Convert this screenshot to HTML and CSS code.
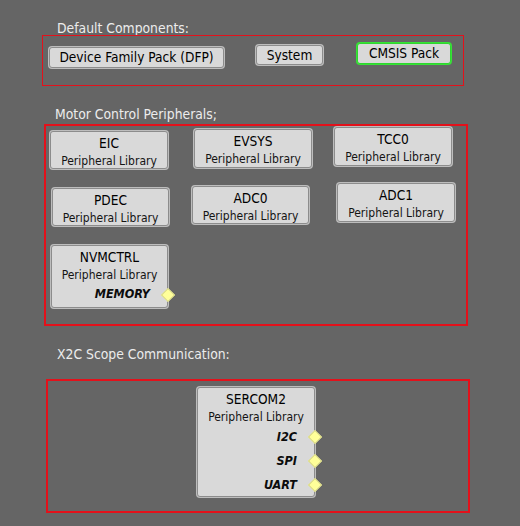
FILE: index.html
```html
<!DOCTYPE html>
<html>
<head>
<meta charset="utf-8">
<link rel="stylesheet" href="styles.css">
</head>
<body>
<div class="canvas">
  <section class="group g1">
    <div class="label">Default Components:</div>
    <div class="box box1">
      <div class="btn dfp">Device Family Pack (DFP)</div>
      <div class="btn sys">System</div>
      <div class="btn cmsis">CMSIS Pack</div>
    </div>
  </section>

  <section class="group g2">
    <div class="label">Motor Control Peripherals;</div>
    <div class="box box2">
      <div class="node n-eic"><div class="title">EIC</div><div class="sub">Peripheral Library</div></div>
      <div class="node n-evsys"><div class="title">EVSYS</div><div class="sub">Peripheral Library</div></div>
      <div class="node n-tcc0"><div class="title">TCC0</div><div class="sub">Peripheral Library</div></div>
      <div class="node n-pdec"><div class="title">PDEC</div><div class="sub">Peripheral Library</div></div>
      <div class="node n-adc0"><div class="title">ADC0</div><div class="sub">Peripheral Library</div></div>
      <div class="node n-adc1"><div class="title">ADC1</div><div class="sub">Peripheral Library</div></div>
      <div class="node n-nvm">
        <div class="title">NVMCTRL</div><div class="sub">Peripheral Library</div>
        <div class="port">MEMORY<span class="pin"></span></div>
      </div>
    </div>
  </section>

  <section class="group g3">
    <div class="label">X2C Scope Communication:</div>
    <div class="box box3">
      <div class="node n-sercom">
        <div class="title">SERCOM2</div><div class="sub">Peripheral Library</div>
        <div class="port">I2C<span class="pin"></span></div>
        <div class="port">SPI<span class="pin"></span></div>
        <div class="port">UART<span class="pin"></span></div>
      </div>
    </div>
  </section>
</div>
</body>
</html>
```

FILE: styles.css
```css
html, body {
  margin: 0;
  padding: 0;
  background: #656565;
}
body {
  width: 520px;
  height: 526px;
  overflow: hidden;
  font-family: "DejaVu Sans", Verdana, sans-serif;
  font-stretch: condensed;
}
.canvas {
  padding-top: 21px;
}
.label {
  height: 14px;
  line-height: 14px;
  font-size: 13.8px;
  color: #ececec;
  white-space: nowrap;
}
.box {
  position: relative;
  box-sizing: border-box;
  border: 2px solid #e3111b;
}
.g1 { margin-left: 42px; }
.g1 .label { padding-left: 15px; }
.box1 { width: 422px; height: 51px; border-width: 1px; }

.g2 { margin-left: 44px; margin-top: 21px; }
.g2 .label { padding-left: 11px; }
.g2 .box { margin-top: 3px; }
.box2 { width: 424px; height: 202px; }

.g3 { margin-left: 46px; margin-top: 21px; }
.g3 .label { padding-left: 11px; }
.g3 .box { margin-top: 18px; }
.box3 { width: 424px; height: 134px; }

.btn, .node {
  position: absolute;
  box-sizing: border-box;
  background: #d9d9d9;
  border: 1px solid #8c8c8c;
  box-shadow: 0 0 0 1px #bdbdbd;
  border-radius: 3px;
  color: #000;
  white-space: nowrap;
  text-align: center;
}
.btn {
  font-size: 13.6px;
  line-height: 19px;
}
.dfp { left: 6px; top: 11px; width: 175px; height: 21px; }
.sys { left: 213px; top: 9px; width: 67px; height: 20px; line-height: 18px; }
.cmsis { left: 314px; top: 7px; width: 94px; height: 21px; border-color: #2fd52f; box-shadow: 0 0 0 1px #35e335; }

.node { width: 118px; height: 38px; padding-top: 1px; }
.title { font-size: 13.6px; line-height: 20px; }
.sub { font-size: 12px; line-height: 16px; color: #141414; }
.port {
  position: relative;
  text-align: right;
  padding-right: 17px;
  font-size: 12.5px;
  line-height: 24px;
  font-weight: bold;
  font-style: italic;
  color: #0c0c0c;
}
.pin {
  position: absolute;
  right: -6px;
  top: 7px;
  width: 8px;
  height: 8px;
  background: #ffff99;
  border: 1px solid #d6d68a;
  transform: rotate(45deg);
}
.n-eic { left: 4px; top: 5px; }
.n-evsys { left: 148px; top: 3px; height: 39px; }
.n-tcc0 { left: 288px; top: 1px; height: 39px; }
.n-pdec { left: 6px; top: 62px; width: 117px; }
.n-adc0 { left: 146px; top: 60px; width: 117px; }
.n-adc1 { left: 291px; top: 57px; height: 39px; }
.n-nvm { left: 5px; top: 119px; width: 117px; height: 63px; }
.n-nvm .port { line-height: 22px; }
.n-sercom { left: 149px; top: 6px; height: 110px; }
```
